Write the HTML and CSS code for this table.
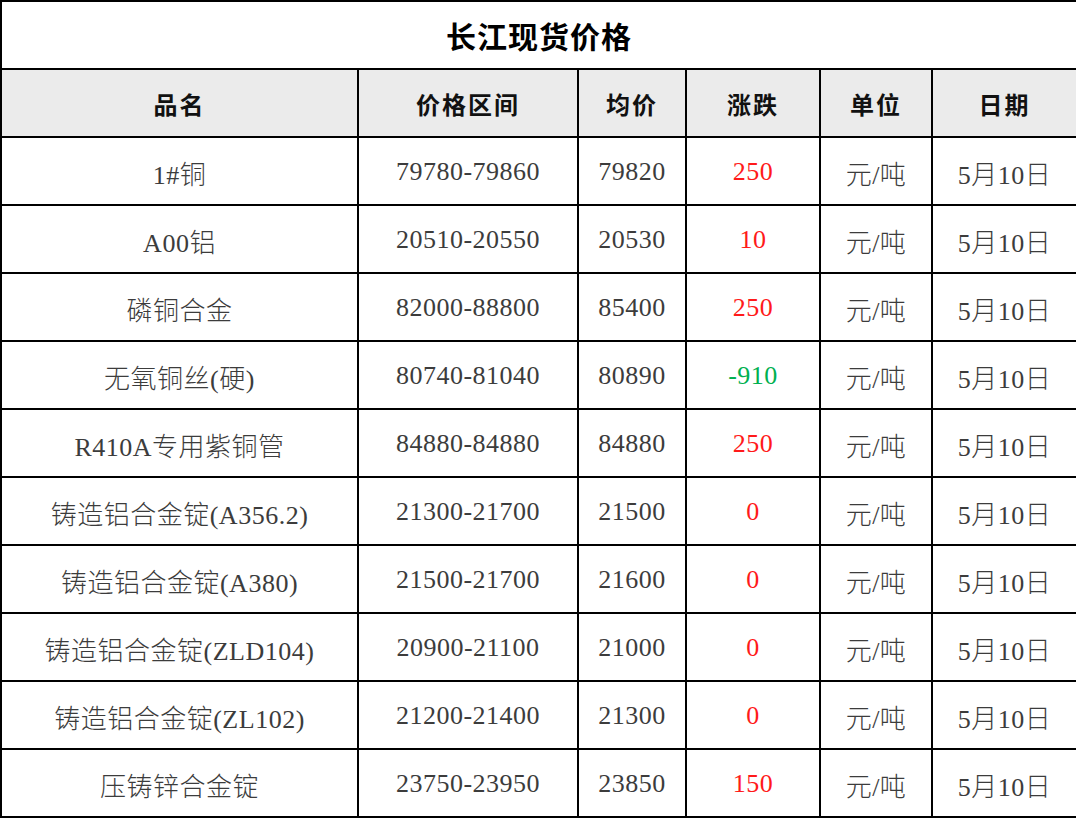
FILE: index.html
```html
<!DOCTYPE html>
<html lang="zh-CN">
<head>
<meta charset="utf-8">
<title>长江现货价格</title>
<link rel="stylesheet" href="styles.css">
</head>
<body>
<table class="price-table">
  <colgroup>
    <col class="c-name"><col class="c-range"><col class="c-avg"><col class="c-chg"><col class="c-unit"><col class="c-date">
  </colgroup>
  <thead>
    <tr class="title-row"><th colspan="6">长江现货价格</th></tr>
    <tr class="head-row"><th>品名</th><th>价格区间</th><th>均价</th><th>涨跌</th><th>单位</th><th>日期</th></tr>
  </thead>
  <tbody>
    <tr><td>1#铜</td><td>79780-79860</td><td>79820</td><td class="up">250</td><td>元/吨</td><td>5月10日</td></tr>
    <tr><td>A00铝</td><td>20510-20550</td><td>20530</td><td class="up">10</td><td>元/吨</td><td>5月10日</td></tr>
    <tr><td>磷铜合金</td><td>82000-88800</td><td>85400</td><td class="up">250</td><td>元/吨</td><td>5月10日</td></tr>
    <tr><td>无氧铜丝(硬)</td><td>80740-81040</td><td>80890</td><td class="down">-910</td><td>元/吨</td><td>5月10日</td></tr>
    <tr><td>R410A专用紫铜管</td><td>84880-84880</td><td>84880</td><td class="up">250</td><td>元/吨</td><td>5月10日</td></tr>
    <tr><td>铸造铝合金锭(A356.2)</td><td>21300-21700</td><td>21500</td><td class="up">0</td><td>元/吨</td><td>5月10日</td></tr>
    <tr><td>铸造铝合金锭(A380)</td><td>21500-21700</td><td>21600</td><td class="up">0</td><td>元/吨</td><td>5月10日</td></tr>
    <tr><td>铸造铝合金锭(ZLD104)</td><td>20900-21100</td><td>21000</td><td class="up">0</td><td>元/吨</td><td>5月10日</td></tr>
    <tr><td>铸造铝合金锭(ZL102)</td><td>21200-21400</td><td>21300</td><td class="up">0</td><td>元/吨</td><td>5月10日</td></tr>
    <tr><td>压铸锌合金锭</td><td>23750-23950</td><td>23850</td><td class="up">150</td><td>元/吨</td><td>5月10日</td></tr>
  </tbody>
</table>
</body>
</html>
```
FILE: styles.css
```css
html, body {
  margin: 0;
  padding: 0;
  background: #ffffff;
}
.price-table {
  width: 1076px;
  border-collapse: collapse;
  table-layout: fixed;
  font-family: "Liberation Serif", "Noto Sans CJK SC", serif;
}
.c-name { width: 357px; }
.c-range { width: 220px; }
.c-avg { width: 108px; }
.c-chg { width: 134px; }
.c-unit { width: 112px; }
.c-date { width: 145px; }
.price-table th,
.price-table td {
  border: 2px solid #000000;
  text-align: center;
  vertical-align: middle;
  padding: 0;
  height: 66px;
  white-space: nowrap;
}
.title-row th {
  font-family: "Noto Sans CJK SC", sans-serif;
  font-size: 30px;
  font-weight: 700;
  color: #000000;
  background: #ffffff;
  letter-spacing: 1px;
}
.head-row th {
  font-family: "Noto Sans CJK SC", sans-serif;
  font-size: 24px;
  font-weight: 700;
  color: #111111;
  background: #ebebeb;
  letter-spacing: 2px;
}
.price-table td {
  font-size: 26px;
  font-weight: 300;
  letter-spacing: 0.5px;
  color: #3c3c3c;
  height: 64px;
  padding-top: 2px;
}
.price-table td.up { color: #ff1a1a; }
.price-table td.down { color: #00b050; }
```
